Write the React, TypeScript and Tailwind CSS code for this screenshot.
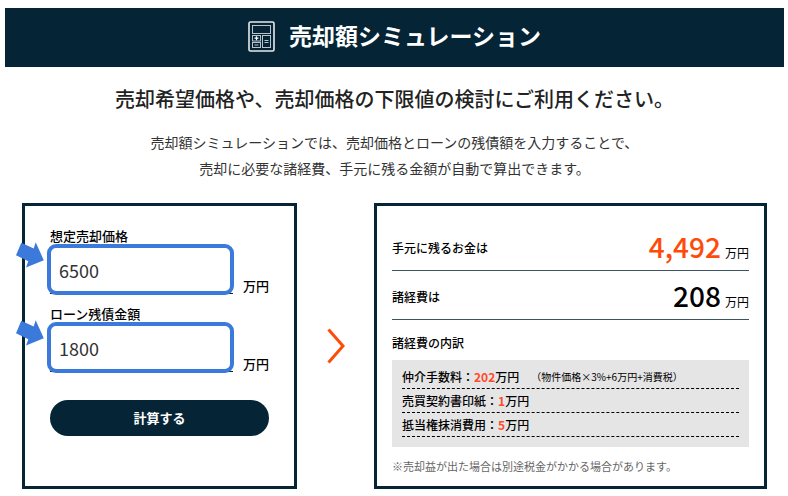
import { useState } from 'react';

interface PriceFieldProps {
  id: string;
  label: string;
  value: string;
  onChange: (value: string) => void;
}

interface CostItem {
  label: string;
  amount: number;
  note?: string;
}

const COSTS: CostItem[] = [
  { label: '仲介手数料', amount: 202, note: '（物件価格×3%+6万円+消費税）' },
  { label: '売買契約書印紙', amount: 1 },
  { label: '抵当権抹消費用', amount: 5 },
];

function CalculatorIcon() {
  return (
    <svg width="27" height="31" viewBox="0 0 27 31" fill="none" aria-hidden="true">
      <rect x="1" y="1" width="25" height="29" rx="1.5" stroke="#e6eaec" strokeWidth="1.6" />
      <g stroke="#b9c3c9">
        <rect x="4.5" y="4.5" width="18" height="8" />
        <rect x="4.5" y="14.5" width="8" height="5.5" />
        <rect x="4.5" y="21.5" width="8" height="5" />
        <rect x="14.5" y="14.5" width="8" height="12" />
        <path d="M16.5 19.5h4M16.5 21.5h4M6.5 24h4" />
      </g>
      <path d="M6.5 17.2h4M8.5 15.2v4" stroke="#ffffff" strokeWidth="1.2" />
    </svg>
  );
}

function PriceField({ id, label, value, onChange }: PriceFieldProps) {
  return (
    <div>
      <label htmlFor={id} className="block text-[13px] leading-5 font-medium text-black">
        {label}
      </label>
      <div className="flex items-end gap-[10px]">
        <div className="relative min-w-0 flex-1">
          <input
            id={id}
            type="text"
            inputMode="numeric"
            value={value}
            onChange={(e) => onChange(e.target.value)}
            className="block h-12 w-full border-b border-[#052536] bg-white px-[9px] text-[18px] text-[#333333] focus:outline-none"
          />
          {/* highlight frame and pointer over the input */}
          <span className="pointer-events-none absolute -top-[2px] -right-px -bottom-px -left-[3px] rounded-[9px] border-4 border-[#3b79da]" />
          <svg
            className="pointer-events-none absolute -top-1 -left-[34px]"
            width="28"
            height="26"
            viewBox="0 0 28 26"
            aria-hidden="true"
          >
            <path d="M5.3 0.7L0 13.3l12.3 6L10 25.6l17.8-7.4L19.7 0.3l-2 6.3z" fill="#3b79da" />
          </svg>
        </div>
        <span className="text-[13px] leading-4 font-medium text-black">万円</span>
      </div>
    </div>
  );
}

export default function App() {
  const [price, setPrice] = useState('6500');
  const [loan, setLoan] = useState('1800');

  return (
    <main className="bg-white pt-2 pr-1 pb-2 pl-[5px] font-['Noto_Sans_CJK_JP',sans-serif] text-black">
      <header className="flex h-[59px] items-center justify-center gap-[14px] bg-[#052536] pb-[2px]">
        <CalculatorIcon />
        <h1 className="pb-1 text-[23px] leading-8 font-bold text-white">売却額シミュレーション</h1>
      </header>

      <div className="mt-[18px] text-center">
        <h2 className="text-xl leading-7 font-medium text-[#222222]">
          売却希望価格や、売却価格の下限値の検討にご利用ください。
        </h2>
        <p className="mt-4 text-sm leading-[26px] text-[#333333]">
          売却額シミュレーションでは、売却価格とローンの残債額を入力することで、
          <br />
          売却に必要な諸経費、手元に残る金額が自動で算出できます。
        </p>
      </div>

      <div className="mt-[22px] grid grid-cols-[275fr_77fr_393fr] pr-[17px] pl-[17px]">
        <form
          onSubmit={(e) => e.preventDefault()}
          className="border-[3px] border-[#052536] px-[25px] pt-5 pb-[50px]"
        >
          <div className="space-y-[10px]">
            <PriceField id="price" label="想定売却価格" value={price} onChange={setPrice} />
            <PriceField id="loan" label="ローン残債金額" value={loan} onChange={setLoan} />
          </div>
          <button
            type="submit"
            className="mt-7 h-9 w-full rounded-full bg-[#052536] text-[13px] font-bold text-white"
          >
            計算する
          </button>
        </form>

        <div className="flex items-center justify-center">
          <svg width="18" height="36" viewBox="0 0 18 36" fill="none" aria-hidden="true">
            <path d="M1.5 1.5L16 18L1.5 34.5" stroke="#ff4b0a" strokeWidth="3" />
          </svg>
        </div>

        <section className="border-[3px] border-[#052536] px-[15px] pt-4">
          <dl>
            <div className="flex h-[49px] items-center justify-between border-b border-[#3c5363]">
              <dt className="pt-1 text-xs font-medium">手元に残るお金は</dt>
              <dd className="flex items-baseline gap-1">
                <span className="text-[28px] leading-8 font-medium text-[#ff4b0a]">4,492</span>
                <span className="text-xs">万円</span>
              </dd>
            </div>
            <div className="flex h-[49px] items-center justify-between border-b border-[#3c5363]">
              <dt className="pt-1 text-xs font-medium">諸経費は</dt>
              <dd className="flex items-baseline gap-1">
                <span className="text-[28px] leading-8 font-medium">208</span>
                <span className="text-xs">万円</span>
              </dd>
            </div>
          </dl>

          <h3 className="mt-[13px] text-xs leading-5 font-medium">諸経費の内訳</h3>
          <ul className="mt-[7px] bg-[#e5e5e5] px-[10px] pt-[5px] pb-[10px]">
            {COSTS.map((cost) => (
              <li
                key={cost.label}
                className="flex h-6 items-center border-b border-dashed border-black text-xs font-medium"
              >
                <span>{cost.label}：</span>
                <span className="font-bold text-[#ff4b2a]">{cost.amount}</span>
                <span>万円</span>
                {cost.note && <span className="ml-3 text-[10px] font-normal">{cost.note}</span>}
              </li>
            ))}
          </ul>
          <p className="mt-[11px] text-[11px] leading-4 text-[#666666]">
            ※売却益が出た場合は別途税金がかかる場合があります。
          </p>
        </section>
      </div>
    </main>
  );
}
